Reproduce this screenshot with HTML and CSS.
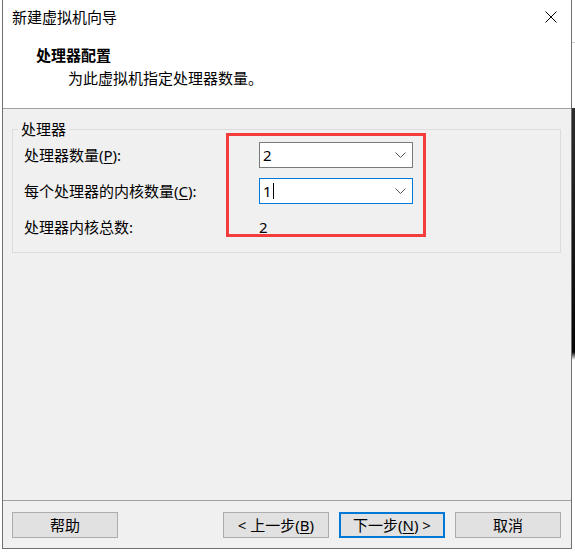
FILE: index.html
```html
<!DOCTYPE html>
<html lang="zh-CN">
<head>
<meta charset="utf-8">
<title>新建虚拟机向导</title>
<link rel="stylesheet" href="styles.css">
</head>
<body>
<div class="desktop">
  <div class="left-strip"></div>
  <div class="window">
    <div class="header">
      <div class="titlebar">
        <span class="title">新建虚拟机向导</span>
        <span class="close">
          <svg width="12" height="12" viewBox="0 0 12 12"><path d="M0.5 0.5 L11.5 11.5 M11.5 0.5 L0.5 11.5" stroke="#000" stroke-width="1" fill="none"/></svg>
        </span>
      </div>
      <div class="page-title"><span class="page-title-text">处理器配置</span></div>
      <div class="page-sub">为此虚拟机指定处理器数量。</div>
    </div>
    <div class="body">
      <div class="group">
        <span class="legend">处理器</span>
        <div class="grid">
          <div class="label">处理器数量(<u>P</u>):</div>
          <div class="combo"><span class="val">2</span><svg class="chev" width="11" height="6" viewBox="0 0 11 6"><path d="M0.5 0.5 L5.5 5.5 L10.5 0.5" stroke="#555" stroke-width="1" fill="none"/></svg></div>
          <div class="label">每个处理器的内核数量(<u>C</u>):</div>
          <div class="combo focus"><span class="val">1</span><span class="caret"></span><svg class="chev" width="11" height="6" viewBox="0 0 11 6"><path d="M0.5 0.5 L5.5 5.5 L10.5 0.5" stroke="#555" stroke-width="1" fill="none"/></svg></div>
          <div class="label">处理器内核总数:</div>
          <div class="total">2</div>
        </div>
        <div class="highlight"></div>
      </div>
    </div>
    <div class="footer">
      <button class="btn">帮助</button>
      <div class="nav">
        <button class="btn">&lt; 上一步(<u>B</u>)</button>
        <button class="btn default">下一步(<u>N</u>) &gt;</button>
        <button class="btn">取消</button>
      </div>
    </div>
  </div>
  <div class="right-strip"></div>
</div>
</body>
</html>
```
FILE: styles.css
```css
html, body {
  margin: 0;
  padding: 0;
  background: #ffffff;
  overflow: hidden;
}
body {
  width: 575px;
  height: 552px;
  font-family: "Noto Sans", "Noto Sans CJK SC", sans-serif;
  font-size: 15px;
  color: #000;
}
.desktop {
  display: flex;
  height: 552px;
}
.left-strip {
  width: 2px;
  flex: none;
  background: #fff;
}
.right-strip {
  flex: 1;
  background: linear-gradient(to bottom, #ffffff 0, #ffffff 42px, #cfcfcf 42px, #cfcfcf 43px, #ffffff 43px, #ffffff 108px, #2d2d2d 108px, #050505 352px, #ffffff 360px);
}
.window {
  width: 570px;
  height: 549px;
  flex: none;
  box-sizing: border-box;
  border: 1px solid #707070;
  border-top: none;
  background: #f0f0f0;
  display: flex;
  flex-direction: column;
}
.header {
  height: 108px;
  flex: none;
  background: #fff;
  border-bottom: 1px solid #a0a0a0;
}
.titlebar {
  height: 34px;
  display: flex;
  align-items: center;
  padding-left: 9px;
}
.title {
  line-height: 20px;
}
.close {
  margin-left: auto;
  width: 40px;
  height: 34px;
  display: flex;
  align-items: center;
  justify-content: center;
}
.page-title {
  margin-top: 11px;
  padding-left: 33px;
  line-height: 20px;
  display: flex;
}
.page-title-text {
  font-family: "Noto Sans CJK SC", sans-serif;
  font-weight: 700;
}
.page-sub {
  margin-top: 3px;
  padding-left: 65px;
  line-height: 20px;
}
.body {
  height: 391px;
  flex: none;
  padding-top: 20px;
  box-sizing: border-box;
}
.group {
  position: relative;
  margin-left: 9px;
  width: 549px;
  height: 124px;
  box-sizing: border-box;
  border: 1px solid #dcdcdc;
  padding: 12px 0 0 11px;
}
.legend {
  position: absolute;
  top: -11px;
  left: 5px;
  padding: 0 3px;
  background: #f0f0f0;
  line-height: 20px;
}
.grid {
  display: grid;
  grid-template-columns: 235px 154px;
  grid-template-rows: 26px 26px 26px;
  row-gap: 10px;
  align-items: center;
}
.label {
  line-height: 20px;
  white-space: nowrap;
}
.combo {
  height: 26px;
  box-sizing: border-box;
  border: 1px solid #7a7a7a;
  background: #fff;
  display: flex;
  align-items: center;
  padding: 0 6px 0 3px;
}
.combo.focus {
  border-color: #0078d7;
}
.val {
  line-height: 20px;
}
.caret {
  width: 1px;
  height: 16px;
  background: #000;
  margin-left: 1px;
}
.chev {
  margin-left: auto;
}
.total {
  line-height: 20px;
}
.highlight {
  position: absolute;
  left: 213px;
  top: 3px;
  width: 200px;
  height: 104px;
  box-sizing: border-box;
  border: 3px solid #f53c3c;
}
.footer {
  height: 48px;
  flex: none;
  box-sizing: border-box;
  border-top: 1px solid #a0a0a0;
  padding: 11px 10px 0 9px;
  display: flex;
  align-items: flex-start;
}
.nav {
  margin-left: auto;
  display: flex;
  gap: 10px;
}
.btn {
  width: 106px;
  height: 26px;
  box-sizing: border-box;
  border: 1px solid #adadad;
  background: #e1e1e1;
  font-family: "Noto Sans", "Noto Sans CJK SC", sans-serif;
  font-size: 15px;
  color: #000;
  padding: 0;
  line-height: 20px;
  margin: 0;
}
.btn.default {
  border: 2px solid #0078d7;
}
u {
  text-decoration: underline;
  text-underline-offset: 2px;
}
```
